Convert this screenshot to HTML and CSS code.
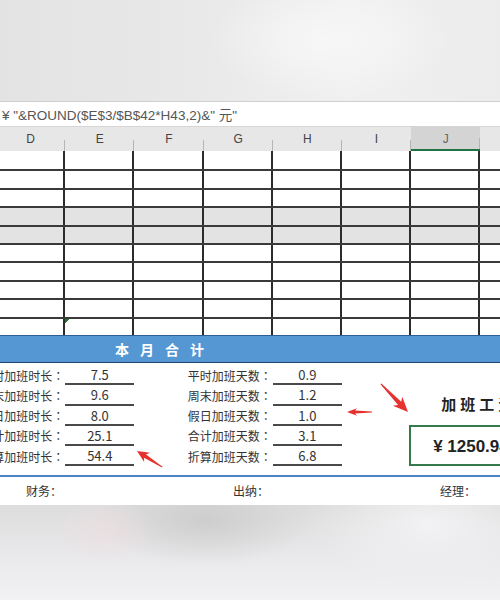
FILE: index.html
```html
<!DOCTYPE html>
<html lang="zh-CN">
<head>
<meta charset="utf-8">
<title>加班统计</title>
<link rel="stylesheet" href="styles.css">
</head>
<body>
<div class="page">
  <div class="top-blur"></div>
  <div class="formula">¥ "&amp;ROUND($E$3/$B$42*H43,2)&amp;" 元"</div>
  <div class="sheet">
    <div class="colhead">
      <span>D</span><span>E</span><span>F</span><span>G</span><span>H</span><span>I</span><span class="sel">J</span><span></span>
    </div>
    <div class="rows">
      <div class="row"><span></span><span></span><span></span><span></span><span></span><span></span><span></span><span></span></div>
      <div class="row"><span></span><span></span><span></span><span></span><span></span><span></span><span></span><span></span></div>
      <div class="row"><span></span><span></span><span></span><span></span><span></span><span></span><span></span><span></span></div>
      <div class="row gray"><span></span><span></span><span></span><span></span><span></span><span></span><span></span><span></span></div>
      <div class="row gray"><span></span><span></span><span></span><span></span><span></span><span></span><span></span><span></span></div>
      <div class="row"><span></span><span></span><span></span><span></span><span></span><span></span><span></span><span></span></div>
      <div class="row"><span></span><span></span><span></span><span></span><span></span><span></span><span></span><span></span></div>
      <div class="row"><span></span><span></span><span></span><span></span><span></span><span></span><span></span><span></span></div>
      <div class="row"><span></span><span></span><span></span><span></span><span></span><span></span><span></span><span></span></div>
      <div class="row"><span></span><span class="err"></span><span></span><span></span><span></span><span></span><span></span><span></span></div>
    </div>
    <div class="band">本月合计</div>
    <div class="summary">
      <div class="lab l1">平时加班时长<i class="c">：</i></div><div class="val v1">7.5</div><div class="mlab m1">平时加班天数<i class="c">：</i></div><div class="val h1">0.9</div>
      <div class="lab l2">周末加班时长<i class="c">：</i></div><div class="val v2">9.6</div><div class="mlab m2">周末加班天数<i class="c">：</i></div><div class="val h2">1.2</div>
      <div class="lab l3">假日加班时长<i class="c">：</i></div><div class="val v3">8.0</div><div class="mlab m3">假日加班天数<i class="c">：</i></div><div class="val h3">1.0</div>
      <div class="lab l4">合计加班时长<i class="c">：</i></div><div class="val v4">25.1</div><div class="mlab m4">合计加班天数<i class="c">：</i></div><div class="val h4">3.1</div>
      <div class="lab l5">折算加班时长<i class="c">：</i></div><div class="val v5">54.4</div><div class="mlab m5">折算加班天数<i class="c">：</i></div><div class="val h5">6.8</div>
      <div class="pay">
        <div class="pay-title">加班工资</div>
        <div class="pay-box">¥ 1250.94 元</div>
      </div>
    </div>
    <div class="sign">
      <span>财务<i class="c">：</i></span><span>出纳<i class="c">：</i></span><span>经理<i class="c">：</i></span>
    </div>
  </div>
  <div class="bottom-blur"></div>
  <svg class="arrows" width="500" height="600" viewBox="0 0 500 600">
    <g fill="#e6322f">
      <polygon transform="translate(137 451) rotate(212.6)" points="0,0 -12,-5.5 -9.5,-1.8 -30,-0.5 -30,0.5 -9.5,1.8 -12,5.5"/>
      <polygon transform="translate(347 412) rotate(180)" points="0,0 -10,-3.8 -8,-1.4 -25,-0.5 -25,0.5 -8,1.4 -10,3.8"/>
      <polygon transform="translate(408 412) rotate(46)" points="0,0 -15,-6.5 -12,-2.2 -39,-0.6 -39,0.6 -12,2.2 -15,6.5"/>
    </g>
  </svg>
</div>
</body>
</html>
```
FILE: styles.css
```css
* { box-sizing: border-box; }
body {
  margin: 0;
  font-family: "Noto Sans CJK SC", "Noto Sans", sans-serif;
  color: #333;
}
.page {
  position: relative;
  width: 500px;
  height: 600px;
  overflow: hidden;
  background: #fff;
}
.c {
  font-style: normal;
  font-family: "Noto Sans CJK TC", "Noto Sans CJK SC", sans-serif;
}
.top-blur {
  height: 101px;
  background:
    radial-gradient(ellipse 120px 60px at 330px 40px, rgba(248,248,248,0.9), transparent),
    linear-gradient(90deg, #e3e3e3, #e9e9e9 40%, #f0f0f0 70%, #ececec);
}
.formula {
  height: 25px;
  border-top: 1px solid #cfcfcf;
  display: flex;
  align-items: center;
  padding-left: 2px;
  font-family: "Liberation Sans", "Noto Sans CJK SC", sans-serif;
  font-size: 13.5px;
  color: #555;
  white-space: nowrap;
}
.sheet {
  margin-left: -4px;
  width: 554px;
}
.colhead {
  display: grid;
  grid-template-columns: repeat(8, 69.2px);
  height: 25px;
  background: #e7e7e7;
  border-top: 1px solid #d6d6d6;
}
.colhead span {
  display: flex;
  align-items: center;
  justify-content: center;
  font-family: "Liberation Sans", sans-serif;
  font-size: 12px;
  color: #444;
  background: linear-gradient(#b5b5b5, #b5b5b5) right bottom / 1px 11px no-repeat;
}
.colhead .sel {
  background-color: #d4d4d4;
  border-bottom: 2px solid #217346;
  color: #666;
  padding-top: 2px;
}
.rows {
  display: flex;
  flex-direction: column;
}
.row {
  display: grid;
  grid-template-columns: repeat(8, 69.2px);
  height: 18.4px;
  background: #fff;
}
.row + .row { border-top: 2px solid #3a3a3a; }
.row.gray { background: #e3e3e3; }
.row span { border-right: 2px solid #2c2c2c; }
.row .err {
  background: linear-gradient(135deg, #1f7a3a 0 3.5px, transparent 3.5px) left top / 6px 6px no-repeat;
}
.band {
  height: 28px;
  background: #5597d3;
  border-top: 1px solid #2f5f90;
  border-bottom: 1.5px solid #25456b;
  display: flex;
  align-items: center;
  padding-left: 119px;
  color: #fff;
  font-weight: bold;
  font-size: 14px;
  letter-spacing: 11px;
}
.summary {
  display: grid;
  grid-template-columns: repeat(8, 69.2px);
  grid-template-rows: repeat(5, 20.3px);
  padding: 2px 0 8.5px;
  height: 112px;
  font-size: 12px;
  color: #333;
}
.lab {
  grid-column: 1;
  display: flex;
  justify-content: flex-end;
  align-items: center;
  white-space: nowrap;
  padding-right: 1px;
}
.mlab {
  grid-column: 3 / span 2;
  display: flex;
  justify-content: flex-end;
  align-items: center;
  white-space: nowrap;
  padding-right: 1px;
}
.val {
  display: flex;
  justify-content: center;
  align-items: center;
  font-size: 13px;
  border-bottom: 2px solid #4a4a4a;
  padding-top: 1px;
}
.v1, .v2, .v3, .v4, .v5 { grid-column: 2; }
.h1, .h2, .h3, .h4, .h5 { grid-column: 5; }
.l1, .v1, .m1, .h1 { grid-row: 1; }
.l2, .v2, .m2, .h2 { grid-row: 2; }
.l3, .v3, .m3, .h3 { grid-row: 3; }
.l4, .v4, .m4, .h4 { grid-row: 4; }
.l5, .v5, .m5, .h5 { grid-row: 5; }
.pay {
  grid-column: 7 / span 2;
  grid-row: 1 / span 5;
  display: flex;
  flex-direction: column;
  padding-top: 29.5px;
  margin-left: -2px;
}
.pay-title {
  height: 20px;
  line-height: 20px;
  padding-left: 32px;
  font-size: 15px;
  font-weight: bold;
  letter-spacing: 4px;
  color: #222;
  white-space: nowrap;
}
.pay-box {
  margin-top: 10.5px;
  height: 42px;
  border: 2px solid #357a4c;
  display: flex;
  align-items: center;
  padding-left: 22px;
  padding-bottom: 3px;
  font-family: "Liberation Sans", "Noto Sans CJK SC", sans-serif;
  font-size: 17px;
  font-weight: bold;
  color: #222;
  white-space: nowrap;
}
.sign {
  height: 30px;
  border-top: 2px solid #4d84c4;
  background: #fff;
  display: grid;
  grid-template-columns: repeat(3, 207px);
  align-items: center;
  padding-left: 30px;
  font-size: 12px;
  color: #333;
}
.bottom-blur {
  height: 95px;
  background:
    radial-gradient(ellipse 50px 35px at 105px 25px, rgba(236,222,224,0.7), transparent),
    radial-gradient(ellipse 110px 45px at 205px 15px, rgba(202,202,202,0.85), transparent),
    radial-gradient(ellipse 120px 60px at 430px 20px, rgba(244,244,246,0.9), transparent),
    linear-gradient(180deg, #dddddd, #e8e8ea 50%, #f2f2f4);
}
.arrows {
  position: absolute;
  left: 0;
  top: 0;
  pointer-events: none;
}
```
